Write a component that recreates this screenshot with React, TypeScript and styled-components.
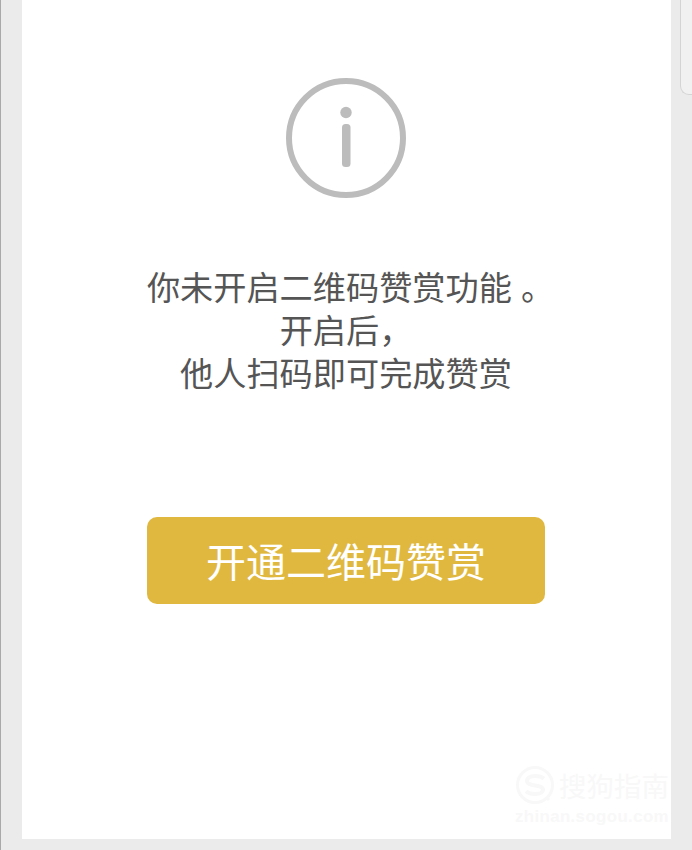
import React from "react";
import styled, { createGlobalStyle } from "styled-components";

const GlobalStyle = createGlobalStyle`
  html, body {
    margin: 0;
    height: 850px;
    overflow: hidden;
    background: #ebebeb;
  }
`;

const Page = styled.div`
  position: relative;
  box-sizing: border-box;
  width: 692px;
  height: 850px;
  padding: 0 21px 11px 22px;
  background: #ebebeb;
  font-family: "Noto Sans CJK SC", "Liberation Sans", sans-serif;
`;

const EdgeLine = styled.div`
  position: absolute;
  left: 0;
  top: 0;
  bottom: 0;
  width: 1px;
  background: #a9a9a9;
`;

const Panel = styled.main`
  position: relative;
  display: flex;
  flex-direction: column;
  align-items: center;
  height: 100%;
  padding: 78px 1px 0 0;
  box-sizing: border-box;
  background: #fff;
`;

const Message = styled.p`
  margin: 66px 0 0;
  color: #555;
  font-size: 33.2px;
  line-height: 43px;
  text-align: center;
  white-space: nowrap;
`;

const FullStop = styled.span`
  margin-left: 9px;
  margin-right: -9px;
`;

const OpenButton = styled.button`
  display: block;
  width: 398px;
  height: 87px;
  margin-top: 124px;
  padding: 0;
  border: 0;
  border-radius: 10px;
  background: #e0b83f;
  color: #fff;
  font-family: inherit;
  font-size: 40px;
  line-height: 87px;
`;

const Handle = styled.div`
  position: absolute;
  top: -10px;
  right: 0;
  width: 12px;
  height: 105px;
  box-sizing: border-box;
  background: #f1f1f1;
  border-left: 1px solid #d4d4d4;
  border-bottom: 1px solid #d4d4d4;
  border-bottom-left-radius: 9px;
`;

const Watermark = styled.div`
  position: absolute;
  right: 2px;
  bottom: 13px;
  display: flex;
  flex-direction: column;
  align-items: flex-end;
  color: #f8f8f8;
  pointer-events: none;
`;

const WatermarkTop = styled.div`
  display: flex;
  align-items: center;
  gap: 4px;
  font-size: 27.5px;
  line-height: 40px;
`;

const WatermarkUrl = styled.div`
  font-family: "Liberation Sans", sans-serif;
  font-size: 17px;
  line-height: 18px;
  font-weight: 700;
  letter-spacing: 0.3px;
  margin-top: 3px;
`;

const InfoIcon = () => (
  <svg width="120" height="120" viewBox="0 0 120 120" style={{ display: "block" }}>
    <circle cx="60" cy="60" r="57" fill="none" stroke="#bcbcbc" strokeWidth="6" />
    <circle cx="60" cy="34.500" r="5.700" fill="#bcbcbc" />
    <rect x="56" y="46" width="8.500" height="43" rx="3.500" fill="#bcbcbc" />
  </svg>
);

const SogouLogo = () => (
  <svg width="40" height="40" viewBox="0 0 40 40" style={{ display: "block" }}>
    <circle cx="20" cy="20" r="17.500" fill="none" stroke="#f8f8f8" strokeWidth="3" />
    <path
      d="M29 13.500c-2-1.600-5-2.500-9-2.500-5 0-8 2-8 5 0 6 16 3 16 8.500 0 3-3.500 4.500-8 4.500-4 0-7-1-9-2.800"
      fill="none"
      stroke="#f8f8f8"
      strokeWidth="4"
    />
    <path d="M31 32l3 3" stroke="#f8f8f8" strokeWidth="3" />
  </svg>
);

export default function App() {
  return (
    <Page>
      <GlobalStyle />
      <EdgeLine />
      <Panel>
        <InfoIcon />
        <Message>
          你未开启二维码赞赏功能
          <FullStop>。</FullStop>
          <br />
          开启后，
          <br />
          他人扫码即可完成赞赏
        </Message>
        <OpenButton>开通二维码赞赏</OpenButton>
        <Watermark>
          <WatermarkTop>
            <SogouLogo />
            搜狗指南
          </WatermarkTop>
          <WatermarkUrl>zhinan.sogou.com</WatermarkUrl>
        </Watermark>
      </Panel>
      <Handle />
    </Page>
  );
}
